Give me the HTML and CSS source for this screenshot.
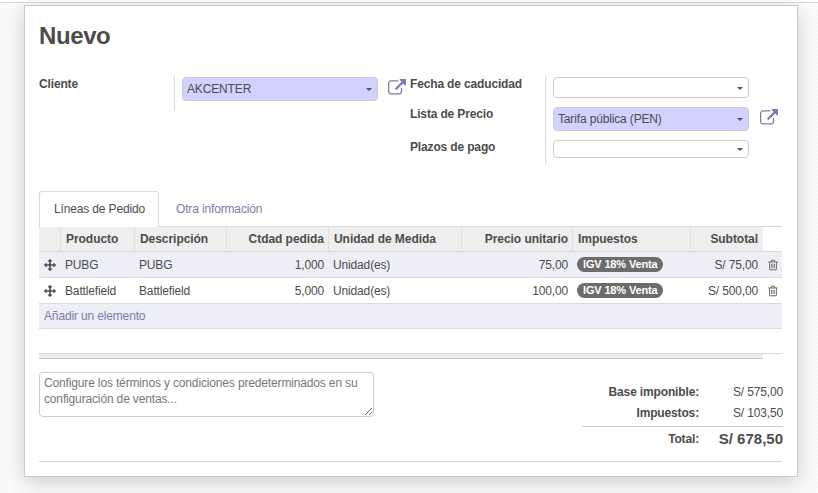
FILE: index.html
```html
<!DOCTYPE html>
<html lang="es">
<head>
    <meta charset="UTF-8">
    <meta name="viewport" content="width=device-width, initial-scale=1.0">
    <title>Nuevo - Pedido de venta</title>
    <link rel="stylesheet" href="styles.css">
</head>
<body>
    <svg class="icon-defs" width="0" height="0" aria-hidden="true">
        <symbol id="i-external" viewBox="0 0 1792 1792">
            <path d="M1408 928v320q0 119-84.5 203.5t-203.5 84.5h-832q-119 0-203.5-84.5t-84.5-203.5v-832q0-119 84.5-203.5t203.5-84.5h704q14 0 23 9t9 23v64q0 14-9 23t-23 9h-704q-66 0-113 47t-47 113v832q0 66 47 113t113 47h832q66 0 113-47t47-113v-320q0-14 9-23t23-9h64q14 0 23 9t9 23zm384-864v512q0 26-19 45t-45 19-45-19l-176-176-652 652q-10 10-23 10t-23-10l-114-114q-10-10-10-23t10-23l652-652-176-176q-19-19-19-45t19-45 45-19h512q26 0 45 19t19 45z"/>
        </symbol>
        <symbol id="i-move" viewBox="0 0 1792 1792">
            <path d="M1792 896q0 26-19 45l-256 256q-19 19-45 19t-45-19-19-45v-128h-384v384h128q26 0 45 19t19 45-19 45l-256 256q-19 19-45 19t-45-19l-256-256q-19-19-19-45t19-45 45-19h128v-384h-384v128q0 26-19 45t-45 19-45-19l-256-256q-19-19-19-45t19-45l256-256q19-19 45-19t45 19 19 45v128h384v-384h-128q-26 0-45-19t-19-45 19-45l256-256q19-19 45-19t45 19l256 256q19 19 19 45t-19 45-45 19h-128v384h384v-128q0-26 19-45t45-19 45 19l256 256q19 19 19 45z"/>
        </symbol>
        <symbol id="i-trash" viewBox="0 0 1792 1792">
            <path d="M704 736v576q0 14-9 23t-23 9h-64q-14 0-23-9t-9-23v-576q0-14 9-23t23-9h64q14 0 23 9t9 23zm256 0v576q0 14-9 23t-23 9h-64q-14 0-23-9t-9-23v-576q0-14 9-23t23-9h64q14 0 23 9t9 23zm256 0v576q0 14-9 23t-23 9h-64q-14 0-23-9t-9-23v-576q0-14 9-23t23-9h64q14 0 23 9t9 23zm128 724v-948h-896v948q0 22 7 40.5t14.5 27 10.5 8.5h832q3 0 10.5-8.5t14.5-27 7-40.5zm-672-1076h448l-48-117q-7-9-17-11h-317q-10 2-17 11zm928 32v64q0 14-9 23t-23 9h-96v948q0 83-47 143.5t-113 60.5h-832q-66 0-113-58.5t-47-141.5v-952h-96q-14 0-23-9t-9-23v-64q0-14 9-23t23-9h309l70-167q15-37 54-63t79-26h320q40 0 79 26t54 63l70 167h309q14 0 23 9t9 23z"/>
        </symbol>
    </svg>

    <div class="top-rule"></div>

    <div class="sheet">
        <h1>Nuevo</h1>

        <div class="form-groups">
            <div class="group-left">
                <label class="label">Cliente</label>
                <div class="value">
                    <div class="select required">AKCENTER</div>
                </div>
                <a class="ext-link"><svg><use href="#i-external"/></svg></a>
            </div>

            <div class="group-right">
                <label class="label">Fecha de caducidad</label>
                <div class="value value-first">
                    <div class="select select-date"></div>
                </div>
                <span></span>

                <label class="label">Lista de Precio</label>
                <div class="value">
                    <div class="select required">Tarifa pública (PEN)</div>
                </div>
                <a class="ext-link"><svg><use href="#i-external"/></svg></a>

                <label class="label label-last">Plazos de pago</label>
                <div class="value value-last">
                    <div class="select select-small"></div>
                </div>
                <span></span>
            </div>
        </div>

        <ul class="tabs">
            <li class="tab active">Líneas de Pedido</li>
            <li class="tab">Otra información</li>
        </ul>

        <table class="lines">
            <colgroup>
                <col class="c-handle">
                <col class="c-product">
                <col class="c-desc">
                <col class="c-qty">
                <col class="c-uom">
                <col class="c-price">
                <col class="c-tax">
                <col class="c-sub">
                <col class="c-del">
            </colgroup>
            <thead>
                <tr>
                    <th></th>
                    <th>Producto</th>
                    <th>Descripción</th>
                    <th class="num">Ctdad pedida</th>
                    <th>Unidad de Medida</th>
                    <th class="num">Precio unitario</th>
                    <th>Impuestos</th>
                    <th class="num sub">Subtotal</th>
                    <th class="blank"></th>
                </tr>
            </thead>
            <tbody>
                <tr class="shaded">
                    <td class="handle"><svg><use href="#i-move"/></svg></td>
                    <td>PUBG</td>
                    <td>PUBG</td>
                    <td class="num">1,000</td>
                    <td>Unidad(es)</td>
                    <td class="num">75,00</td>
                    <td><span class="badge">IGV 18% Venta</span></td>
                    <td class="num sub">S/ 75,00</td>
                    <td class="del"><svg><use href="#i-trash"/></svg></td>
                </tr>
                <tr>
                    <td class="handle"><svg><use href="#i-move"/></svg></td>
                    <td>Battlefield</td>
                    <td>Battlefield</td>
                    <td class="num">5,000</td>
                    <td>Unidad(es)</td>
                    <td class="num">100,00</td>
                    <td><span class="badge">IGV 18% Venta</span></td>
                    <td class="num sub">S/ 500,00</td>
                    <td class="del"><svg><use href="#i-trash"/></svg></td>
                </tr>
                <tr class="shaded add-row">
                    <td colspan="9"><a>Añadir un elemento</a></td>
                </tr>
            </tbody>
        </table>

        <div class="list-foot"></div>

        <div class="bottom">
            <textarea class="notes" placeholder="Configure los términos y condiciones predeterminados en su configuración de ventas..."></textarea>

            <table class="totals">
                <tr>
                    <td class="t-label">Base imponible:</td>
                    <td class="t-value">S/ 575,00</td>
                </tr>
                <tr class="t-taxes">
                    <td class="t-label">Impuestos:</td>
                    <td class="t-value">S/ 103,50</td>
                </tr>
                <tr class="t-total">
                    <td class="t-label">Total:</td>
                    <td class="t-value">S/ 678,50</td>
                </tr>
            </table>
        </div>

        <div class="chatter-line"></div>
    </div>
</body>
</html>
```

FILE: styles.css
```css
body {
    margin: 0;
    height: 493px;
    overflow: hidden;
    font-family: "Liberation Sans", Arial, sans-serif;
    font-size: 12px;
    letter-spacing: -0.15px;
    color: #4c4c4c;
    background-color: #fafafa;
    background-image: repeating-conic-gradient(#f8f8f8 0 25%, #fcfcfc 0 50%);
    background-size: 4px 4px;
}

.icon-defs {
    display: none;
}

.top-rule {
    box-sizing: border-box;
    height: 3px;
    background-color: white;
    border-bottom: 1px solid #d8d8d8;
}

.sheet {
    box-sizing: border-box;
    width: 774px;
    height: 472px;
    margin: 2px 0 0 24px;
    padding: 0 14px;
    background-color: white;
    border: 1px solid #c9c9d2;
    box-shadow: 0 5px 20px -1px rgba(0, 0, 0, 0.2);
}

h1 {
    box-sizing: border-box;
    height: 55px;
    margin: 0;
    padding-top: 15px;
    font-size: 24px;
    line-height: 30px;
    font-weight: bold;
    letter-spacing: -0.4px;
}

/* formulario */
.form-groups {
    display: flex;
    height: 115px;
    padding-top: 15px;
}

.group-left,
.group-right {
    display: grid;
    grid-template-columns: 135px 214px 22px;
    align-self: start;
}

.label {
    font-weight: bold;
    line-height: 15px;
    padding-top: 1px;
}

.label-last {
    padding-top: 0;
}

.value {
    box-sizing: border-box;
    padding: 1px 0 9px 7px;
    border-left: 1px solid #d9d9d9;
}

.group-left .value {
    padding-bottom: 10px;
}

.value-first {
    padding-bottom: 8px;
}

.value-last {
    padding: 0 0 6px 7px;
}

.select {
    position: relative;
    box-sizing: border-box;
    width: 196px;
    height: 24px;
    padding-left: 4px;
    line-height: 22px;
    background-color: white;
    border: 1px solid #ccc;
    border-radius: 4px;
}

.select::after {
    content: "";
    position: absolute;
    right: 5px;
    top: 50%;
    margin-top: -1px;
    border-top: 3px solid #555;
    border-left: 3px solid transparent;
    border-right: 3px solid transparent;
}

.required {
    background-color: #d2d2ff;
}

.select-date {
    height: 21px;
}

.select-small {
    height: 18px;
}

.ext-link svg {
    display: block;
    width: 18px;
    height: 18px;
    margin-top: 3px;
    fill: #7c7bad;
}

.group-right .ext-link svg {
    margin-left: 1px;
}

/* pestañas */
.tabs {
    display: flex;
    height: 36px;
    margin: 0;
    padding: 0;
    list-style: none;
}

.tab {
    box-sizing: border-box;
    height: 36px;
    padding: 11px 16px 0 17px;
    line-height: 15px;
    color: #7c7bad;
    white-space: nowrap;
}

.tab.active {
    width: 120px;
    padding: 10px 0 0 14px;
    color: #4c4c4c;
    background-color: white;
    border: 1px solid #d9d9d9;
    border-bottom: none;
    border-radius: 3px 3px 0 0;
    position: relative;
    z-index: 1;
}

/* tabla de líneas */
.lines {
    width: 743px;
    margin-top: -1px;
    table-layout: fixed;
    border-collapse: separate;
    border-spacing: 0;
}

.c-handle { width: 21px; }
.c-product { width: 74px; }
.c-desc { width: 92px; }
.c-qty { width: 102px; }
.c-uom { width: 133px; }
.c-price { width: 111px; }
.c-tax { width: 118px; }
.c-sub { width: 73px; }
.c-del { width: 19px; }

.lines th,
.lines td {
    box-sizing: border-box;
    white-space: nowrap;
}

.lines th {
    height: 26px;
    padding: 0 4px 0 5px;
    font-weight: bold;
    letter-spacing: -0.05px;
    text-align: left;
    background-color: #eeeeee;
    border-top: 1px solid #d9d9d9;
    border-bottom: 1px solid #d9d9d9;
    border-left: 1px solid #dfdfdf;
}

.lines th:first-child {
    border-left: none;
}

.lines th.blank {
    background-color: white;
    border-left: none;
}

.lines th.num,
.lines td.num {
    text-align: right;
}

.lines td {
    height: 26px;
    padding: 0 4px 0 5px;
    border-bottom: 1px solid #d9d9d9;
}

.lines th.sub,
.lines td.sub {
    padding-right: 5px;
}

.lines .add-row td {
    height: 25px;
}

.shaded td {
    background-color: #eeeef6;
}

.lines td.handle {
    padding: 0 0 0 5px;
}

.handle svg {
    display: block;
    width: 12px;
    height: 12px;
    fill: #4c4c4c;
}

.lines td.del {
    padding: 0 0 0 4px;
}

.del svg {
    display: block;
    width: 12px;
    height: 12px;
    fill: #666;
}

.badge {
    display: inline-block;
    height: 15px;
    padding: 0 6px;
    line-height: 15px;
    font-size: 11px;
    font-weight: bold;
    color: white;
    background-color: #6c6c6c;
    border-radius: 8px;
}

.add-row a {
    color: #7c7bad;
}

.list-foot {
    position: relative;
    box-sizing: border-box;
    width: 724px;
    height: 6px;
    margin-top: 24px;
    background-color: #eeeeee;
    border-bottom: 1px solid #c9c9c9;
}

.list-foot::before {
    content: "";
    position: absolute;
    left: 0;
    top: 0;
    width: 743px;
    border-top: 1px solid #d9d9d9;
}

/* pie del formulario */
.bottom {
    box-sizing: border-box;
    display: flex;
    justify-content: space-between;
    align-items: flex-start;
    width: 744px;
    height: 102px;
    padding-top: 13px;
}

.notes {
    box-sizing: border-box;
    width: 335px;
    height: 45px;
    margin: 0;
    padding: 2px 4px;
    font-family: inherit;
    font-size: 12px;
    letter-spacing: -0.15px;
    line-height: 16px;
    color: #4c4c4c;
    border: 1px solid #ccc;
    border-radius: 4px;
}

.notes::placeholder {
    color: #777;
    opacity: 1;
    line-height: 16px;
}

.totals {
    width: 201px;
    margin-top: 9px;
    border-collapse: collapse;
}

.totals td {
    height: 21px;
    padding: 0;
    text-align: right;
}

.t-label {
    width: 117px;
    font-weight: bold;
}

.totals .t-taxes td {
    height: 21px;
    padding-bottom: 3px;
}

.totals .t-total td {
    height: 23px;
    border-top: 1px solid #c9c9c9;
}

.t-total .t-value {
    font-size: 15px;
    font-weight: bold;
    letter-spacing: 0;
}

.chatter-line {
    width: 743px;
    border-top: 1px solid #d9d9d9;
}
```
